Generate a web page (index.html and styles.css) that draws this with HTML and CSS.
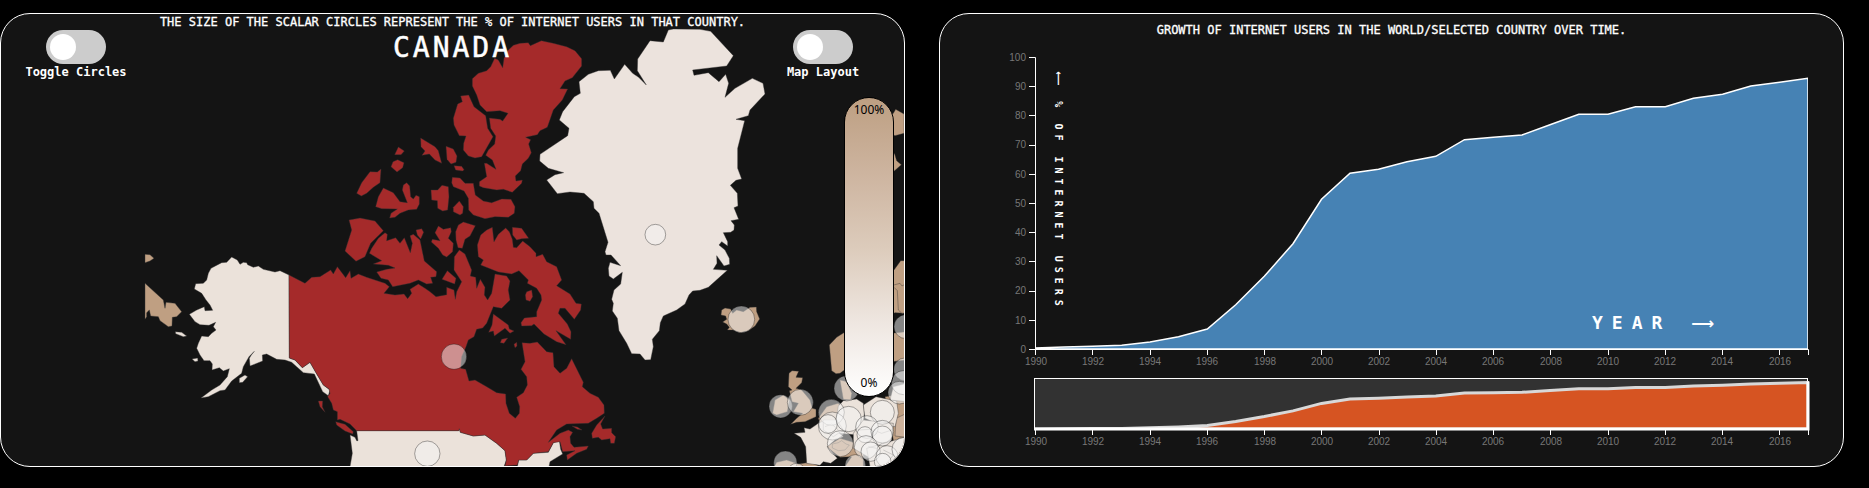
FILE: index.html
```
<!DOCTYPE html>
<html lang="en">
<head>
<meta charset="utf-8">
<title>Internet users</title>
<link rel="stylesheet" href="styles.css">
</head>
<body>
<main class="dashboard">
  <section class="panel">
    <svg class="layer" viewBox="3 42 2709 1356" role="img" aria-label="Map of internet users">
      <!-- USA and Russia -->
      <g class="land usa" transform="translate(990 600)">
        <path d="M60,705 L75,712 80,722 84,722 80,692 386,692 388,686 391,697 430,708 465,705 500,730 525,752 529,780 522,800 60,800 67,760Z"/>
        <path d="M562,800 L566,780 590,780 610,760 655,757 670,728 688,722 692,748 698,762 660,785 657,800Z"/>
      </g>
      <g class="land usa" transform="translate(390 690)">
        <path d="M477,135 L450,122 435,126 400,118 385,108 370,112 353,104 350,98 340,97 330,103 322,90 305,81 290,97 275,98 243,115 235,130 230,150 220,160 197,161 193,177 215,190 228,210 240,225 248,241 225,242 223,230 200,240 178,253 195,275 210,284 237,286 257,277 250,290 258,300 245,310 235,320 215,318 205,340 200,355 210,375 222,392 240,392 247,402 246,420 268,413 280,423 298,416 292,440 270,465 245,480 213,504 235,500 270,482 285,480 305,453 335,430 340,410 357,380 373,364 364,375 358,385 360,408 398,393 397,375 410,372 440,388 465,390 485,397 520,428 553,432 578,485 595,497 600,480 580,465 558,428 540,397 517,413 495,390 478,384Z"/>
        <path d="M328,445L345,435 353,440 338,457 328,458Z"/>
        <path d="M136,305L155,307 170,318 160,320 137,311Z"/>
        <path d="M186,387L203,384 204,393 195,395Z"/>
      </g>
      <g class="land tan" transform="translate(390 690)">
        <path d="M45,160L100,210 105,235 108,217 135,220 155,245 140,260 127,262 126,288 115,290 90,272 85,260 62,258 58,240 50,248 50,260 45,268Z"/>
        <path d="M45,73L60,74 72,85 60,93 45,98Z"/>
      </g>

      <!-- Canada: mainland and southern islands -->
      <g class="land canada" transform="translate(990 600)">
        <path d="M-123,225 L-75,250 -55,232 -30,230 2,210 10,222 22,200 47,233 60,212 63,235 85,222 110,232 165,250 178,260 162,280 195,285 222,282 233,296 245,280 240,268 265,252 285,265 300,275 318,290 350,284 350,262 372,270 376,298 380,275 395,245 372,210 373,170 388,150 405,162 425,210 421,228 437,232 440,265 451,238 465,262 463,285 473,300 485,280 495,222 530,228 540,243 535,270 540,300 515,325 490,320 470,370 458,384 440,388 432,410 415,420 408,440 395,470 392,505 407,508 417,543 435,540 470,560 500,578 527,582 528,610 538,640 556,655 568,640 569,620 560,592 580,578 592,555 590,530 573,508 585,485 576,428 600,430 622,426 650,455 669,458 672,500 690,520 710,505 725,476 760,547 757,560 780,580 805,592 822,615 823,640 800,655 775,670 710,672 680,690 655,727 690,700 715,690 728,697 720,710 722,730 732,742 775,738 770,748 740,760 712,780 710,765 735,752 698,755 690,725 670,728 655,755 610,760 590,780 566,780 562,795 525,798 529,780 525,752 500,730 465,705 430,708 391,697 388,686 386,692 80,692 60,672 30,658 22,660 22,635 10,630 5,610 -7,590 0,580 -3,567 -20,555 -42,518 -60,487 -83,503 -105,480 -122,474Z"/>
        <path d="M726,678L742,681 756,690 742,688Z"/>
        <path d="M825,648L812,672 818,687 845,685 845,698 857,710 853,730 842,730 840,716 815,720 805,712 787,715 785,700 800,675Z"/>
        <path d="M17,665L45,673 70,695 68,702 45,693 20,675Z"/>
        <path d="M-35,603L-22,603 -23,620 -15,637 -30,620Z"/>
        <path d="M57,60L90,54 135,63 160,92 122,130 105,170 78,184 45,153 65,90Z"/>
        <path d="M165,98L172,103 170,122 197,113 210,130 223,113 241,158 247,130 240,107 250,103 270,120 283,183 320,215 318,230 302,232 308,250 290,252 265,240 240,250 188,260 175,240 153,235 140,216 170,208 195,204 175,196 130,192 155,182 118,160 125,145 145,115Z"/>
        <path d="M258,90L275,86 281,97 272,117 262,105Z"/>
        <path d="M325,78L340,88 362,83 364,95 355,115 370,130 368,155 350,171 338,165 325,145 304,126 307,118 330,122 315,98Z"/>
        <path d="M385,75L400,66 436,77 420,108 405,118 397,145 384,143 378,120 377,95Z"/>
        <path d="M352,212L378,235 374,252 350,243 336,238Z"/>
        <path d="M487,82L492,125 505,103 527,84 538,95 547,118 550,142 560,143 578,123 600,140 618,160 618,170 638,163 650,185 680,200 695,240 680,257 720,282 738,310 754,312 752,330 733,358 705,325 690,325 685,340 712,372 723,395 722,418 678,392 708,434 680,425 642,402 612,372 605,377 575,378 573,368 583,354 620,350 620,335 635,300 633,285 620,265 592,250 595,240 567,212 545,222 505,216 452,195 460,180 445,170 442,135 452,105 470,90Z"/>
        <path d="M547,82L575,85 596,115 575,116 560,120 548,105Z"/>
        <path d="M590,275L605,270 608,290 600,304 588,300 586,285Z"/>
        <path d="M490,342L535,375 538,387 552,393 540,400 525,385 493,408 490,393 476,397 486,375Z"/>
        <path d="M515,418L533,414 522,430 511,428Z"/>
        <path d="M552,433L560,427 561,438 555,443Z"/>
      </g>

      <!-- Canada: northern islands -->
      <g class="land canada" transform="translate(960 0)">
        <path d="M565,150L580,136 600,130 625,128 631,137 664,122 700,130 740,140 765,152 785,176 785,198 757,233 735,243 720,266 743,267 727,300 700,330 682,382 660,392 652,404 617,412 632,419 626,432 634,458 625,475 607,492 602,512 586,528 588,543 607,540 605,550 577,577 550,568 530,570 490,563 478,558 478,545 500,530 493,490 500,490 528,508 517,480 497,466 505,450 524,432 527,408 512,385 508,354 540,358 548,363 564,340 540,332 500,335 480,315 470,285 457,258 457,236 475,220 500,212 512,200 524,175 535,180 548,203 552,175Z"/>
        <path d="M422,288L446,285 462,320 497,347 503,385 519,410 485,470 465,474 445,468 430,450 431,430 438,408 418,407 402,375 400,355 413,312 427,305Z"/>
        <path d="M302,414L345,440 355,452 365,490 345,480 328,462 306,466 315,453 303,440Z"/>
        <path d="M378,439L400,447 411,468 408,487 393,492 381,478Z"/>
        <path d="M402,497L425,499 432,509 428,513 407,510Z"/>
        <path d="M235,441L253,453 243,464 224,464Z"/>
        <path d="M233,479L252,488 248,503 231,516 213,500 219,485Z"/>
        <path d="M183,507L180,548 160,562 140,580 124,588 110,580 125,548 150,515 172,516Z"/>
        <path d="M190,564L220,578 240,605 262,608 247,570 250,555 260,548 269,558 272,590 280,597 288,586 298,590 298,612 290,628 265,630 240,640 225,652 209,654 213,640 232,627 185,626 167,620 175,590Z"/>
        <path d="M333,570L353,570 366,556 385,560 387,590 383,630 368,633 353,625 352,602 335,600Z"/>
        <path d="M418,603L430,620 428,640 420,645 400,635 400,622Z"/>
        <path d="M397,532L420,534 435,550 460,550 466,585 490,603 515,608 545,597 573,598 585,620 583,640 565,652 525,650 495,656 460,645 446,630 445,595 432,573 400,560 395,548Z"/>
      </g>

      <!-- Greenland and Svalbard -->
      <g transform="translate(1560 0)">
        <path class="land greenland" d="M177,245L205,223 235,212 271,211 283,237 314,193 338,220 356,232 379,255 352,212 353,177 390,122 430,126 445,90 460,87 540,88 572,94 640,167 620,198 518,210 522,226 565,218 597,245 617,223 626,250 615,292 645,265 697,235 729,250 735,282 690,330 685,347 648,358 674,362 653,445 653,505 665,537 648,541 631,556 652,580 654,618 642,623 656,658 633,662 643,675 642,690 632,697 610,698 623,725 623,738 605,725 597,735 615,750 628,775 629,793 612,798 590,767 591,790 580,808 622,811 565,862 540,871 518,873 507,885 495,912 470,930 430,948 421,968 418,992 397,1018 400,1040 392,1079 375,1080 360,1062 335,1061 320,1030 297,992 292,955 277,933 280,910 275,898 282,870 302,852 307,817 280,837 267,828 265,805 270,787 302,797 273,765 258,765 255,755 264,727 237,640 222,625 220,605 192,580 150,576 112,581 80,540 105,524 131,518 85,505 59,483 60,463 143,407 147,385 118,360 128,335 163,290 181,280Z"/>
        <path class="land tan" d="M1110,345L1120,340 1127,328 1152,342 1152,400 1125,407 1110,400Z"/>
        <path class="land tan" d="M1110,450L1124,462 1130,482 1144,494 1122,514Z"/>
      </g>

      <!-- Europe -->
      <g transform="translate(1740 600)">
        <g class="land tan">
          <path d="M425,330L435,324 452,327 458,340 470,330 490,335 510,322 529,321 530,335 539,357 525,378 505,392 480,398 460,390 442,390 448,382 440,372 428,366 440,358 437,348 423,345Z"/>
          <path d="M748,435L770,412 820,380 820,500 790,512 780,520 768,521 755,512Z"/>
          <path d="M930,220L942,210 962,182 980,182 980,340 945,338 930,345Z"/>
          <path d="M930,258L960,250 966,258 980,250M942,262L952,272 955,330 968,342"/>
          <path d="M935,400L980,395 980,480 935,485Z"/>
          <path d="M627,520L636,512 656,514 648,532 668,533 665,548 648,565 665,570 690,600 697,625 708,628 708,650 675,665 650,667 632,673 650,655 668,640 640,635 655,610 636,605 628,572 636,570 625,560Z"/>
          <path d="M610,585L628,600 622,635 590,645 578,640 585,600Z"/>
          <path d="M583,800L590,787 620,780 655,792 690,787 722,800Z"/>
          <path d="M780,540L800,545 815,580 812,600 790,598Z"/>
          <path d="M740,740L780,715 830,730 850,750 850,800 795,800 815,770 780,772Z"/>
          <path d="M915,590L980,580 980,800 900,800 940,720Z"/>
          <path d="M740,620L775,610 795,640 770,680 720,670 715,655Z"/>
        </g>
        <path class="land shade" d="M948,655L980,640 980,712 945,708Z"/>
        <g class="land usa">
          <path d="M642,700L675,697 672,683 690,687 715,670 735,660 790,710 765,720 742,740 772,775 752,790 730,785 720,796 680,790 677,740 662,712Z"/>
          <path d="M775,618L790,602 830,597 850,610 853,640 848,690 830,705 780,700 765,680Z"/>
          <path d="M850,615L888,590 950,603 955,640 945,680 900,675 855,655Z"/>
          <path d="M820,700L850,660 940,670 935,720 880,780 820,745Z"/>
          <path d="M730,660L770,660 790,690 760,710 730,690Z"/>
          <path d="M860,745L980,710 980,800 870,800Z"/>
          <path d="M940,560L980,550 980,605 930,600Z"/>
        </g>
        <path class="land tan" d="M757,732L775,728 785,722 798,732 808,735 795,750 775,752 757,744Z"/>
        <path class="land borders" d="M835,690L870,688 890,700 870,715M880,690L905,700 935,690M865,740L890,745 905,730M735,680L755,672 775,690M910,750L940,765 920,790"/>
      </g>

      <g class="bubbles">
        <circle cx="1966" cy="704" r="31"/>
        <circle cx="1362" cy="1070" r="38"/>
        <circle cx="1282" cy="1361" r="38"/>
        <g transform="translate(1740 600)">
          <circle cx="484" cy="358" r="40"/>
          <circle cx="602" cy="619" r="35"/>
          <circle cx="661" cy="607" r="39"/>
          <circle cx="616" cy="788" r="35"/>
          <circle cx="650" cy="818" r="28"/>
          <circle cx="800" cy="565" r="38"/>
          <circle cx="754" cy="637" r="39"/>
          <circle cx="757" cy="678" r="42"/>
          <circle cx="744" cy="672" r="28"/>
          <circle cx="806" cy="657" r="38"/>
          <circle cx="781" cy="731" r="39"/>
          <circle cx="907" cy="637" r="36"/>
          <circle cx="861" cy="681" r="34"/>
          <circle cx="855" cy="704" r="24"/>
          <circle cx="907" cy="695" r="34"/>
          <circle cx="907" cy="708" r="30"/>
          <circle cx="858" cy="742" r="35"/>
          <circle cx="872" cy="755" r="29"/>
          <circle cx="921" cy="770" r="33"/>
          <circle cx="908" cy="785" r="25"/>
          <circle cx="826" cy="795" r="31"/>
          <circle cx="978" cy="380" r="36"/>
          <circle cx="975" cy="508" r="34"/>
          <circle cx="970" cy="548" r="36"/>
          <circle cx="958" cy="578" r="34"/>
          <circle cx="972" cy="748" r="36"/>
        </g>
      </g>
    </svg>

    <div class="layer overlay">
      <label class="toggle">
        <input class="switch" type="checkbox">
        <span>Toggle Circles</span>
      </label>
      <header class="heading">
        <h2 class="title">THE SIZE OF THE SCALAR CIRCLES REPRESENT THE % OF INTERNET USERS IN THAT COUNTRY.</h2>
        <p class="country">CANADA</p>
      </header>
      <div class="side">
        <label class="toggle">
          <input class="switch" type="checkbox">
          <span>Map Layout</span>
        </label>
        <div class="legend"><span>100%</span><span>0%</span></div>
      </div>
    </div>
  </section>

  <section class="panel">
    <svg class="layer" viewBox="940 14 903 452" role="img" aria-label="Area chart of internet users by year">
      <defs>
        <clipPath id="plot"><rect x="1035" y="57" width="773" height="293"/></clipPath>
        <clipPath id="mini"><rect x="1035" y="378" width="774" height="52"/></clipPath>
      </defs>
      <path class="area" clip-path="url(#plot)" d="M1035.5,349 L1035.5,348 1064,347 1092.7,346.3 1121.7,345.3 1150,342 1178.5,336.7 1207.3,329 1235.7,304.7 1264.3,276.3 1293,243.7 1321.5,199.3 1350,173.3 1378.5,169.3 1407,161.7 1435.8,156.3 1464.5,139.7 1493.3,137.3 1522,135 1550,124.7 1578.8,114.3 1608,114.3 1635.5,106.7 1665.3,106.7 1693.4,98.3 1722.6,94.3 1750.8,86 1779.7,82.3 1808,78.3 1808,349Z"/>
      <path class="axis" d="M1029,57.5H1035.5V349.5H1029M1029,320.5h6M1029,291.5h6M1029,261.5h6M1029,232.5h6M1029,203.5h6M1029,174.5h6M1029,145.5h6M1029,115.5h6M1029,86.5h6"/>
      <path class="axis" d="M1035.5,355V349.5H1808.5V355M1092.5,350v5M1150.5,350v5M1207.5,350v5M1264.5,350v5M1321.5,350v5M1379.5,350v5M1436.5,350v5M1493.5,350v5M1550.5,350v5M1608.5,350v5M1665.5,350v5M1722.5,350v5M1779.5,350v5"/>
      <g class="ticks ticks-y">
        <text x="1026" y="61">100</text><text x="1026" y="90">90</text><text x="1026" y="119">80</text><text x="1026" y="148">70</text><text x="1026" y="178">60</text><text x="1026" y="207">50</text><text x="1026" y="236">40</text><text x="1026" y="265">30</text><text x="1026" y="294">20</text><text x="1026" y="324">10</text><text x="1026" y="353">0</text>
      </g>
      <g class="ticks">
        <text x="1036" y="365">1990</text><text x="1093" y="365">1992</text><text x="1150" y="365">1994</text><text x="1207" y="365">1996</text><text x="1265" y="365">1998</text><text x="1322" y="365">2000</text><text x="1379" y="365">2002</text><text x="1436" y="365">2004</text><text x="1493" y="365">2006</text><text x="1551" y="365">2008</text><text x="1608" y="365">2010</text><text x="1665" y="365">2012</text><text x="1722" y="365">2014</text><text x="1780" y="365">2016</text>
      </g>
      <text class="label-y" transform="translate(1055 71) rotate(90)"><tspan class="arrow-y">⟵</tspan> % OF INTERNET USERS</text>
      <text class="label-x" x="1592" y="329">YEAR <tspan class="arrow-x">⟶</tspan></text>

      <rect class="brush" x="1034.5" y="378.5" width="773" height="50"/>
      <path class="mini" clip-path="url(#mini)" d="M1035,429 L1064,428.8 1092.7,428.6 1121.7,428.4 1150,427.8 1178.5,426.9 1207.3,425.5 1235.7,421.4 1264.3,416.5 1293,410.9 1321.5,403.4 1350,398.9 1378.5,398.2 1407,396.9 1435.8,396 1464.5,393.1 1493.3,392.7 1522,392.3 1550,390.5 1578.8,388.8 1608,388.8 1635.5,387.5 1665.3,387.5 1693.4,386 1722.6,385.3 1750.8,384 1779.7,383.3 1808,382.6 1808,429Z"/>
      <path class="mini-edge" d="M1034,429H1808V381.5"/>
      <path class="axis" d="M1035.5,430v5M1808.5,430v5M1092.5,430v5M1150.5,430v5M1207.5,430v5M1264.5,430v5M1321.5,430v5M1379.5,430v5M1436.5,430v5M1493.5,430v5M1550.5,430v5M1608.5,430v5M1665.5,430v5M1722.5,430v5M1779.5,430v5"/>
      <g class="ticks">
        <text x="1036" y="445">1990</text><text x="1093" y="445">1992</text><text x="1150" y="445">1994</text><text x="1207" y="445">1996</text><text x="1265" y="445">1998</text><text x="1322" y="445">2000</text><text x="1379" y="445">2002</text><text x="1436" y="445">2004</text><text x="1493" y="445">2006</text><text x="1551" y="445">2008</text><text x="1608" y="445">2010</text><text x="1665" y="445">2012</text><text x="1722" y="445">2014</text><text x="1780" y="445">2016</text>
      </g>
    </svg>
    <h2 class="layer title chart-title">GROWTH OF INTERNET USERS IN THE WORLD/SELECTED COUNTRY OVER TIME.</h2>
  </section>
</main>
</body>
</html>
```
FILE: styles.css
```
* { box-sizing: border-box; }

body {
  margin: 0;
  background: #000;
  color: #fff;
  font-family: "DejaVu Sans Mono", monospace;
}

.dashboard {
  display: flex;
  gap: 34px;
  padding: 13px 25px 0 0;
}

.panel {
  flex: 1;
  min-width: 0;
  display: grid;
  overflow: hidden;
  border: 1px solid #fff;
  border-radius: 30px;
  background: #141414;
}

.layer {
  grid-area: 1 / 1;
  width: 100%;
  min-width: 0;
}

svg.layer { display: block; }

.overlay {
  display: grid;
  grid-template-columns: 150px 1fr 150px;
  align-items: start;
}

.heading { text-align: center; }

.title {
  margin: 0;
  font-size: 12px;
  line-height: 16px;
  font-weight: 400;
  white-space: nowrap;
  -webkit-text-stroke: 0.3px #fff;
}

.heading .title { display: flex; justify-content: center; }

.chart-title {
  padding-top: 8px;
  text-align: center;
}

.country {
  margin: 0;
  font-size: 28px;
  line-height: 36px;
  letter-spacing: 3px;
  -webkit-text-stroke: 0.5px #fff;
}

.toggle {
  display: flex;
  flex-direction: column;
  align-items: center;
  padding-top: 16px;
  font-size: 12px;
  line-height: 16px;
  font-weight: 700;
}

.switch {
  appearance: none;
  position: relative;
  width: 60px;
  height: 34px;
  margin: 0;
  border-radius: 17px;
  background: #ccc;
  cursor: pointer;
}

.switch::before {
  content: "";
  position: absolute;
  left: 4px;
  top: 4px;
  width: 26px;
  height: 26px;
  border-radius: 50%;
  background: #fff;
}

.switch:checked { background: #4682b4; }
.switch:checked::before { left: 30px; }

.side {
  display: flex;
  flex-direction: column;
}

.side .toggle { padding-right: 12px; }

.legend {
  display: flex;
  flex-direction: column;
  justify-content: space-between;
  align-items: center;
  align-self: flex-end;
  width: 50px;
  height: 300px;
  margin: 17px 10px 0 0;
  padding: 3px 0 4px;
  border: 1px solid #000;
  border-radius: 25px;
  background: linear-gradient(#bd9f82, #cdb49f 25%, #dccbbb 50%, #eee6e0 75%, #fff);
  color: #000;
  font: 12px/18px "Noto Sans", sans-serif;
}

.land { stroke: #333; stroke-opacity: .6; stroke-width: 2; stroke-linejoin: round; }
.canada { fill: #a52a2a; }
.usa { fill: #ebe2da; }
.greenland { fill: #ece3dd; }
.tan { fill: #bf9f82; }
.shade { fill: #cdb29c; }
.borders { fill: none; }

.bubbles {
  fill: #f5f5f5;
  fill-opacity: .5;
  stroke: #000;
  stroke-opacity: .5;
  stroke-width: 2;
}

.area { fill: #4682b4; stroke: #fff; stroke-width: 1.5; }
.axis { fill: none; stroke: #fff; }
.brush { fill: #323232; stroke: #fff; }
.mini { fill: #d65422; stroke: #d8d8d8; stroke-width: 3; }
.mini-edge { fill: none; stroke: #fff; stroke-width: 3; }

.ticks {
  fill: #777;
  font: 10px "Liberation Sans", sans-serif;
  text-anchor: middle;
}

.ticks-y { text-anchor: end; }

.label-y { fill: #fff; font-size: 10px; font-weight: 700; letter-spacing: 5px; }
.label-x { fill: #fff; font-size: 18px; font-weight: 700; letter-spacing: 9px; }
.arrow-x, .arrow-y { font-family: "DejaVu Sans", sans-serif; }
.arrow-x { font-size: 16px; }
.arrow-y { font-size: 10px; }
```
